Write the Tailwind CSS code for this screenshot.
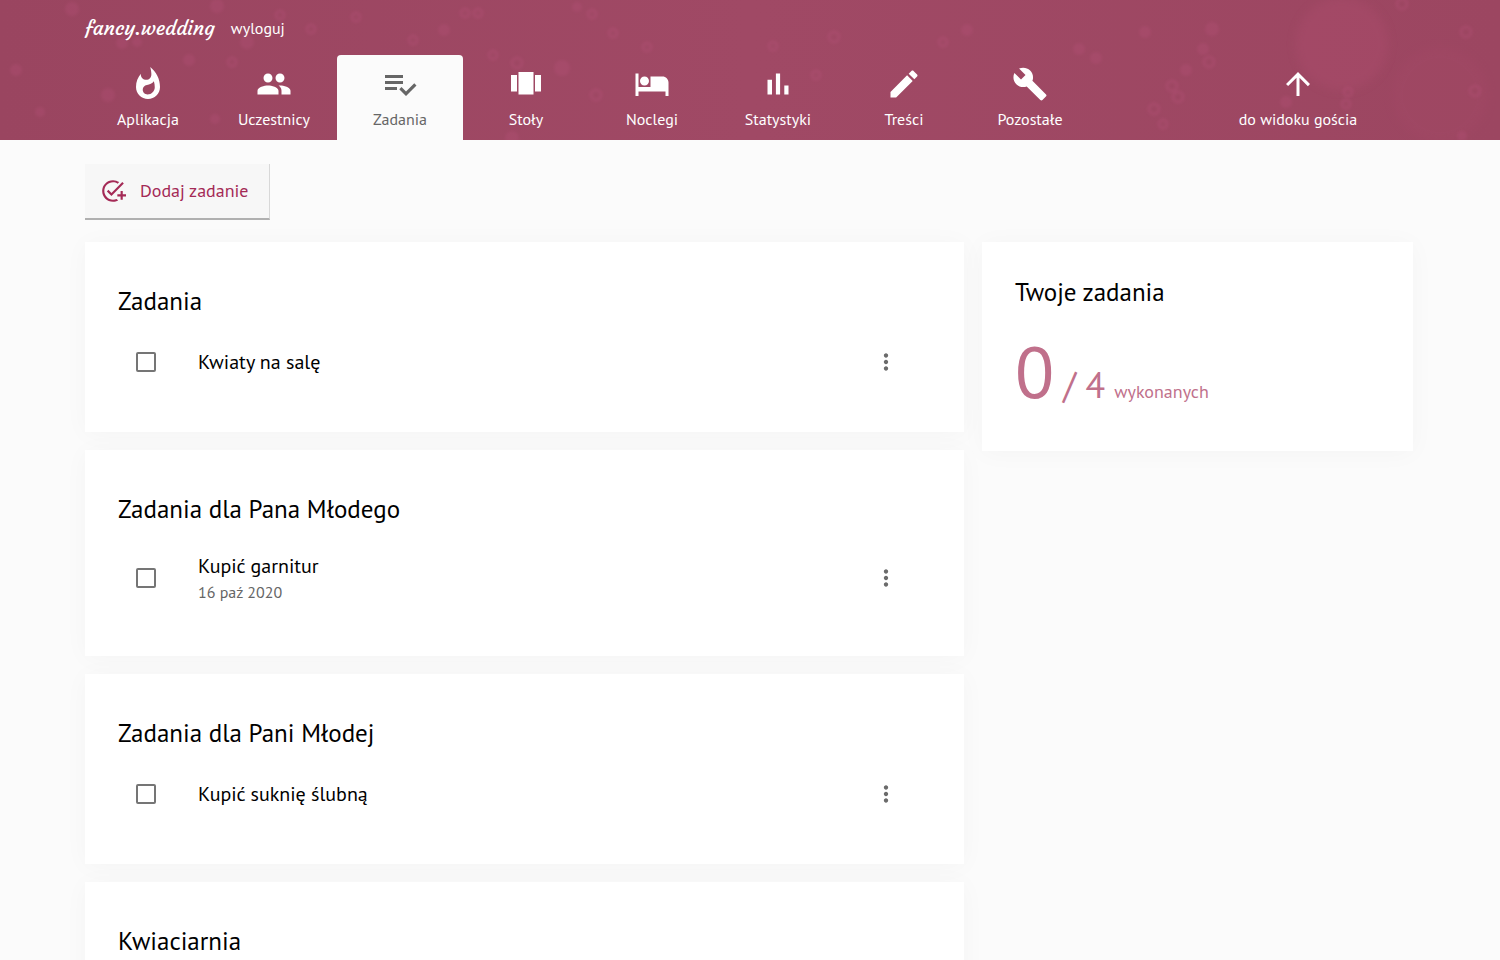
<!DOCTYPE html>
<html lang="pl">
<head>
<meta charset="utf-8">
<meta name="viewport" content="width=device-width, initial-scale=1">
<title>fancy.wedding – Zadania</title>
<script src="https://cdn.jsdelivr.net/npm/@tailwindcss/browser@4"></script>
</head>
<body class="min-h-screen bg-[#fbfbfb] font-['PT_Sans','Lato',sans-serif] text-black">

<header class="relative overflow-hidden bg-linear-to-r from-[#9a4560] via-[#a04965] to-[#9c4661] text-white">
  <!-- confetti texture -->
  <svg class="absolute inset-0 h-full w-full" viewBox="0 0 1500 140" preserveAspectRatio="xMidYMin slice" aria-hidden="true">
    <defs><filter id="soft"><feGaussianBlur stdDeviation="1.6"/></filter><filter id="softer"><feGaussianBlur stdDeviation="4"/></filter></defs>
    <circle cx="1342" cy="44" r="46" fill="#a94c6b" opacity=".5" filter="url(#softer)"/>
    <circle cx="1440" cy="95" r="48" fill="#a94c6b" opacity=".2" filter="url(#softer)"/>
    <g fill="#b8527a" opacity=".28" filter="url(#soft)">
      <circle cx="72" cy="9" r="7"/><circle cx="217" cy="6" r="7"/><circle cx="122" cy="43" r="6"/><circle cx="137" cy="42" r="5"/><circle cx="247" cy="42" r="7"/><circle cx="189" cy="60" r="6"/><circle cx="108" cy="95" r="7"/><circle cx="215" cy="119" r="5"/><circle cx="444" cy="30" r="6"/><circle cx="562" cy="68" r="8"/><circle cx="577" cy="7" r="5"/><circle cx="1145" cy="32" r="6"/><circle cx="1212" cy="29" r="7"/><circle cx="1203" cy="49" r="6"/><circle cx="1186" cy="70" r="6"/><circle cx="1286" cy="102" r="6"/><circle cx="967" cy="30" r="6"/><circle cx="1079" cy="49" r="6"/><circle cx="1096" cy="58" r="6"/><circle cx="512" cy="138" r="7"/><circle cx="16" cy="70" r="6"/><circle cx="40" cy="112" r="5"/><circle cx="1462" cy="136" r="5"/>
    </g>
    <g fill="none" stroke="#b8527a" stroke-width="3" opacity=".34" filter="url(#soft)">
      <circle cx="465" cy="13" r="4"/><circle cx="478" cy="13" r="4"/><circle cx="592" cy="14" r="4"/><circle cx="613" cy="33" r="4"/><circle cx="517" cy="63" r="5"/><circle cx="493" cy="55" r="4"/><circle cx="596" cy="95" r="5"/><circle cx="647" cy="47" r="4"/><circle cx="773" cy="46" r="4"/><circle cx="834" cy="37" r="5"/><circle cx="816" cy="75" r="4"/><circle cx="943" cy="42" r="4"/><circle cx="1209" cy="62" r="5"/><circle cx="1172" cy="86" r="5"/><circle cx="1178" cy="97" r="5"/><circle cx="1154" cy="109" r="5"/><circle cx="1163" cy="124" r="4"/><circle cx="1348" cy="92" r="4"/><circle cx="1346" cy="104" r="4"/><circle cx="1475" cy="91" r="5"/><circle cx="1466" cy="32" r="5"/><circle cx="1402" cy="4" r="5"/><circle cx="413" cy="40" r="4"/><circle cx="356" cy="17" r="4"/><circle cx="311" cy="29" r="4"/><circle cx="232" cy="62" r="4"/><circle cx="280" cy="15" r="4"/>
    </g>
  </svg>

  <div class="relative pr-[87px] pl-[85px]">
    <div class="flex h-[55px] items-center gap-4">
      <a href="#" class="font-['Courgette','Merienda','PT_Sans',cursive] text-xl leading-8">fancy.wedding</a>
      <a href="#" class="text-base">wyloguj</a>
    </div>
    <nav class="flex h-[85px] text-base leading-5">
      <a href="#" class="flex max-w-[126px] flex-1 flex-col items-center gap-[7px] pt-[11px]">
        <svg class="size-9" viewBox="0 0 24 24" fill="currentColor"><path d="M13.5.67s.74 2.65.74 4.8c0 2.06-1.35 3.73-3.41 3.73-2.07 0-3.63-1.67-3.63-3.73l.03-.36C5.21 7.51 4 10.62 4 14c0 4.42 3.58 8 8 8s8-3.58 8-8C20 8.61 17.41 3.8 13.5.67zM11.71 19c-1.78 0-3.22-1.4-3.22-3.14 0-1.62 1.05-2.76 2.81-3.12 1.77-.36 3.6-1.21 4.62-2.58.39 1.29.59 2.65.59 4.04 0 2.65-2.15 4.8-4.8 4.8z"/></svg>
        Aplikacja</a>
      <a href="#" class="flex max-w-[126px] flex-1 flex-col items-center gap-[7px] pt-[11px]">
        <svg class="size-9" viewBox="0 0 24 24" fill="currentColor"><path d="M16 11c1.66 0 2.99-1.34 2.99-3S17.66 5 16 5c-1.66 0-3 1.34-3 3s1.34 3 3 3zm-8 0c1.66 0 2.99-1.34 2.99-3S9.66 5 8 5C6.34 5 5 6.34 5 8s1.34 3 3 3zm0 2c-2.33 0-7 1.17-7 3.5V19h14v-2.5c0-2.33-4.67-3.5-7-3.5zm8 0c-.29 0-.62.02-.97.05 1.16.84 1.97 1.97 1.97 3.45V19h6v-2.5c0-2.33-4.67-3.5-7-3.5z"/></svg>
        Uczestnicy</a>
      <a href="#" aria-current="page" class="flex max-w-[126px] flex-1 flex-col items-center gap-[7px] rounded-t bg-[#fbfbfb] pt-[11px] text-[#666]">
        <svg class="size-9" viewBox="0 0 24 24" fill="currentColor"><path d="M14 10H2v2h12v-2zm0-4H2v2h12V6zM2 16h8v-2H2v2zm19.5-4.5L23 13l-6.99 7-4.51-4.5L13 14l3.01 3 5.49-5.5z"/></svg>
        Zadania</a>
      <a href="#" class="flex max-w-[126px] flex-1 flex-col items-center gap-[7px] pt-[11px]">
        <svg class="size-9" viewBox="0 0 24 24" fill="currentColor"><path d="M7 19h10V4H7v15zm-5-2h4V6H2v11zM18 6v11h4V6h-4z"/></svg>
        Stoły</a>
      <a href="#" class="flex max-w-[126px] flex-1 flex-col items-center gap-[7px] pt-[11px]">
        <svg class="size-9" viewBox="0 0 24 24" fill="currentColor"><path d="M7 13c1.66 0 3-1.34 3-3S8.66 7 7 7s-3 1.34-3 3 1.34 3 3 3zm12-6h-8v7H3V5H1v15h2v-3h18v3h2v-9c0-2.21-1.79-4-4-4z"/></svg>
        Noclegi</a>
      <a href="#" class="flex max-w-[126px] flex-1 flex-col items-center gap-[7px] pt-[11px]">
        <svg class="size-9" viewBox="0 0 24 24" fill="currentColor"><path d="M5 9.2h3V19H5zM10.6 5h2.8v14h-2.8zm5.6 8H19v6h-2.8z"/></svg>
        Statystyki</a>
      <a href="#" class="flex max-w-[126px] flex-1 flex-col items-center gap-[7px] pt-[11px]">
        <svg class="size-9" viewBox="0 0 24 24" fill="currentColor"><path d="M3 17.25V21h3.75L17.81 9.94l-3.75-3.75L3 17.25zM20.71 7.04c.39-.39.39-1.02 0-1.41l-2.34-2.34c-.39-.39-1.02-.39-1.41 0l-1.83 1.83 3.75 3.75 1.83-1.83z"/></svg>
        Treści</a>
      <a href="#" class="flex max-w-[126px] flex-1 flex-col items-center gap-[7px] pt-[11px]">
        <svg class="size-9" viewBox="0 0 24 24" fill="currentColor"><path d="M22.7 19l-9.1-9.1c.9-2.3.4-5-1.5-6.9-2-2-5-2.4-7.4-1.3L9 6 6 9 1.6 4.7C.4 7.1.9 10.1 2.9 12.1c1.9 1.9 4.6 2.4 6.9 1.5l9.1 9.1c.4.4 1 .4 1.4 0l2.3-2.3c.5-.4.5-1.1.1-1.4z"/></svg>
        Pozostałe</a>
      <a href="#" class="ml-auto flex w-[230px] flex-col items-center gap-[7px] pt-[11px]">
        <svg class="size-9" viewBox="0 0 24 24" fill="currentColor"><path d="M4 12l1.41 1.41L11 7.83V20h2V7.83l5.58 5.59L20 12l-8-8-8 8z"/></svg>
        do widoku gościa</a>
    </nav>
  </div>
</header>

<main class="pt-6 pr-[87px] pb-6 pl-[85px]">
  <button type="button" class="flex h-14 items-center gap-[14px] border-r border-b-2 border-r-[#d8d8d8] border-b-[#b0b0b0] bg-[#f7f7f7] pr-5 pl-[15px] text-lg text-[#a42a56]">
    <svg class="size-[26px]" viewBox="0 0 24 24" fill="currentColor"><path d="M22 5.18L10.59 16.6l-4.24-4.24 1.41-1.41 2.83 2.83 10-10L22 5.18zM12 20c-4.41 0-8-3.59-8-8s3.59-8 8-8c1.57 0 3.04.46 4.28 1.25l1.45-1.45C16.1 2.67 14.13 2 12 2 6.48 2 2 6.48 2 12s4.48 10 10 10c1.73 0 3.36-.44 4.78-1.22l-1.5-1.5c-1 .46-2.11.72-3.28.72zM19 15h-3v2h3v3h2v-3h3v-2h-3v-3h-2v3z"/></svg>
    Dodaj zadanie
  </button>

  <div class="mt-[22px] grid grid-cols-[879fr_431fr] items-start gap-[18px]">
    <div class="flex flex-col gap-[18px]">

      <section class="bg-white px-[33px] pt-[43px] pb-[42px] shadow-[0_2px_24px_rgba(0,0,0,0.03)]">
        <h2 class="text-[25px] leading-8">Zadania</h2>
        <div class="mt-[17px] flex min-h-14 items-center pr-8 pl-[18px]">
          <input id="t1" type="checkbox" class="size-5 appearance-none rounded-xs border-2 border-[#757575] checked:bg-[#a42a56]">
          <label for="t1" class="flex-1 pl-[42px] text-[20px] leading-7">Kwiaty na salę</label>
          <button type="button" aria-label="Opcje" class="text-[#6b6b6b]"><svg class="size-[26px]" viewBox="0 0 24 24" fill="currentColor"><path d="M12 8c1.1 0 2-.9 2-2s-.9-2-2-2-2 .9-2 2 .9 2 2 2zm0 2c-1.1 0-2 .9-2 2s.9 2 2 2 2-.9 2-2-.9-2-2-2zm0 6c-1.1 0-2 .9-2 2s.9 2 2 2 2-.9 2-2-.9-2-2-2z"/></svg></button>
        </div>
      </section>

      <section class="bg-white px-[33px] pt-[43px] pb-[42px] shadow-[0_2px_24px_rgba(0,0,0,0.03)]">
        <h2 class="text-[25px] leading-8">Zadania dla Pana Młodego</h2>
        <div class="mt-[17px] flex min-h-[72px] items-center pr-8 pl-[18px]">
          <input id="t2" type="checkbox" class="size-5 appearance-none rounded-xs border-2 border-[#757575] checked:bg-[#a42a56]">
          <label for="t2" class="flex flex-1 flex-col pl-[42px] text-[20px] leading-7">Kupić garnitur<span class="text-base leading-6 text-[#666]">16 paź 2020</span></label>
          <button type="button" aria-label="Opcje" class="text-[#6b6b6b]"><svg class="size-[26px]" viewBox="0 0 24 24" fill="currentColor"><path d="M12 8c1.1 0 2-.9 2-2s-.9-2-2-2-2 .9-2 2 .9 2 2 2zm0 2c-1.1 0-2 .9-2 2s.9 2 2 2 2-.9 2-2-.9-2-2-2zm0 6c-1.1 0-2 .9-2 2s.9 2 2 2 2-.9 2-2-.9-2-2-2z"/></svg></button>
        </div>
      </section>

      <section class="bg-white px-[33px] pt-[43px] pb-[42px] shadow-[0_2px_24px_rgba(0,0,0,0.03)]">
        <h2 class="text-[25px] leading-8">Zadania dla Pani Młodej</h2>
        <div class="mt-[17px] flex min-h-14 items-center pr-8 pl-[18px]">
          <input id="t3" type="checkbox" class="size-5 appearance-none rounded-xs border-2 border-[#757575] checked:bg-[#a42a56]">
          <label for="t3" class="flex-1 pl-[42px] text-[20px] leading-7">Kupić suknię ślubną</label>
          <button type="button" aria-label="Opcje" class="text-[#6b6b6b]"><svg class="size-[26px]" viewBox="0 0 24 24" fill="currentColor"><path d="M12 8c1.1 0 2-.9 2-2s-.9-2-2-2-2 .9-2 2 .9 2 2 2zm0 2c-1.1 0-2 .9-2 2s.9 2 2 2 2-.9 2-2-.9-2-2-2zm0 6c-1.1 0-2 .9-2 2s.9 2 2 2 2-.9 2-2-.9-2-2-2z"/></svg></button>
        </div>
      </section>

      <section class="bg-white px-[33px] pt-[43px] pb-[42px] shadow-[0_2px_24px_rgba(0,0,0,0.03)]">
        <h2 class="text-[25px] leading-8">Kwiaciarnia</h2>
      </section>
    </div>

    <aside class="bg-white px-[33px] pt-[34px] pb-[39px] shadow-[0_2px_24px_rgba(0,0,0,0.03)]">
      <h2 class="text-[25px] leading-8">Twoje zadania</h2>
      <p class="mt-6 flex items-baseline gap-[9px] text-[#c0708b]">
        <span class="text-[72px] leading-20">0</span>
        <span class="text-4xl">/ 4</span>
        <span class="text-lg">wykonanych</span>
      </p>
    </aside>
  </div>
</main>
</body>
</html>
